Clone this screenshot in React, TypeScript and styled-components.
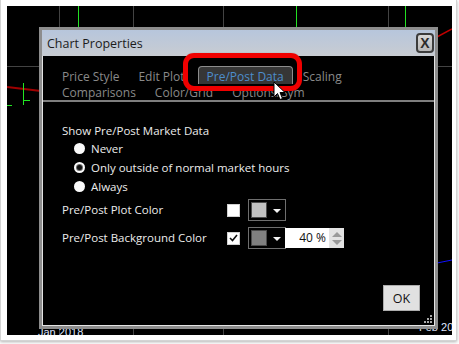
import React from "react";
import styled, { createGlobalStyle } from "styled-components";

const Global = createGlobalStyle`
  html, body { margin: 0; padding: 0; background: #ffffff; }
  body {
    width: 459px; height: 344px; overflow: hidden;
    font-family: "Open Sans", "Noto Sans", sans-serif;
  }
`;

const Frame = styled.div`
  width: 457px;
  height: 341px;
  box-sizing: border-box;
  padding: 6px 5px 6px 7px;
  background: #ffffff;
  border: 1px solid #d4d4d4;
  border-top: none;
  box-shadow: 0 1px 3px rgba(0, 0, 0, 0.3);
`;

const ChartArea = styled.div`
  position: relative;
  width: 445px;
  height: 329px;
  margin-left: -1px;
  background: #000;
  overflow: hidden;
`;

const ChartSvg = styled.svg`
  position: absolute;
  left: 0;
  top: 0;
`;

const AxisLabel = styled.div<{ $x: number; $y: number }>`
  position: absolute;
  left: ${(p) => p.$x}px;
  top: ${(p) => p.$y}px;
  font-family: "Liberation Sans", Arial, sans-serif;
  font-size: 11px;
  line-height: 13px;
  color: #dfe6ff;
  white-space: nowrap;
`;

const Dialog = styled.div`
  position: absolute;
  left: 32px;
  top: 21px;
  width: 399px;
  height: 302px;
  box-sizing: border-box;
  border: 3px solid #8d8d8d;
  display: flex;
  flex-direction: column;
`;

const TitleBar = styled.div`
  height: 26px;
  flex: none;
  display: flex;
  align-items: center;
  justify-content: space-between;
  padding: 0 1px 0 5px;
  background: linear-gradient(#b7c6dc, #c8ccd2);
`;

const Title = styled.span`
  font-size: 12.5px;
  color: #1c1c1c;
`;

const CloseButton = styled.div`
  width: 14px;
  height: 16px;
  border: 2px solid #3c3c3c;
  border-radius: 4px;
  background: linear-gradient(#d8d8d8, #b8b8b8);
  display: flex;
  align-items: center;
  justify-content: center;
  font-family: "Liberation Sans", Arial, sans-serif;
  font-weight: bold;
  font-size: 14px;
  color: #2c2c2c;
`;

const Body = styled.div`
  flex: 1;
  display: flex;
  flex-direction: column;
  background: #000;
  border: 1px solid #e4e4e4;
  border-top: none;
  position: relative;
`;

const TabsArea = styled.div`
  padding: 10px 0 0 10px;
  display: flex;
  flex-direction: column;
`;

const TabRow = styled.div<{ $h: number }>`
  display: flex;
  align-items: flex-end;
  gap: 1px;
  height: ${(p) => p.$h}px;
`;

const Tab = styled.div<{ $active?: boolean }>`
  box-sizing: border-box;
  padding: 2px 8px 0;
  height: 18px;
  line-height: 15px;
  font-size: 12px;
  white-space: nowrap;
  margin-left: ${(p) => (p.$active ? "3px" : "0")};
  color: ${(p) => (p.$active ? "#4d8dcc" : "#8a8a8a")};
  background: ${(p) => (p.$active ? "#363636" : "transparent")};
  border: 1px solid ${(p) => (p.$active ? "#8c8c8c" : "transparent")};
  border-bottom: none;
  border-radius: 4px 4px 0 0;
`;

const Separator = styled.div`
  height: 2px;
  background: #7e7e7e;
`;

const Content = styled.div`
  flex: 1;
  padding: 21px 0 0 19px;
  display: flex;
  flex-direction: column;
`;

const Label = styled.div`
  font-size: 11.5px;
  line-height: 16px;
  color: #ececec;
  white-space: nowrap;
`;

const RadioGroup = styled.div`
  display: flex;
  flex-direction: column;
  padding: 0 0 0 12px;
`;

const RadioRow = styled.div`
  display: flex;
  align-items: center;
  gap: 6px;
  height: 19px;
`;

const Radio = styled.div<{ $checked?: boolean }>`
  width: 11px;
  height: 11px;
  border-radius: 50%;
  background: #fafafa;
  display: flex;
  align-items: center;
  justify-content: center;
  &::after {
    content: "";
    display: ${(p) => (p.$checked ? "block" : "none")};
    width: 5px;
    height: 5px;
    border-radius: 50%;
    background: #111;
    box-shadow: 0 0 0 1px #6a6a6a;
  }
`;

const FieldRow = styled.div<{ $mt: number }>`
  display: flex;
  align-items: center;
  height: 22px;
  margin-top: ${(p) => p.$mt}px;
`;

const FieldLabel = styled(Label)`
  width: 165px;
`;

const CheckBox = styled.div`
  width: 13px;
  height: 13px;
  box-sizing: border-box;
  background: #ffffff;
  border: 1px solid #d0d0d0;
  display: flex;
  align-items: center;
  justify-content: center;
  margin-right: 8px;
`;

const ColorPicker = styled.div`
  width: 38px;
  height: 22px;
  box-sizing: border-box;
  border: 1px solid #6e6e6e;
  display: flex;
  align-items: center;
  padding-left: 2px;
  gap: 6px;
`;

const Swatch = styled.div<{ $color: string }>`
  width: 16px;
  height: 16px;
  box-sizing: border-box;
  background: ${(p) => p.$color};
  border: 1px solid #4a4a4a;
`;

const Arrow = styled.div`
  width: 0;
  height: 0;
  border-left: 4px solid transparent;
  border-right: 4px solid transparent;
  border-top: 4px solid #f4f4f4;
  margin-top: 1px;
`;

const NumberInput = styled.div`
  width: 44px;
  height: 20px;
  background: #ffffff;
  font-size: 12px;
  line-height: 20px;
  text-align: right;
  padding-right: 3px;
  box-sizing: border-box;
  color: #111;
  margin-left: -1px;
`;

const Spinner = styled.div`
  width: 15px;
  height: 20px;
  background: #e3e3e3;
  display: flex;
  flex-direction: column;
  align-items: center;
  justify-content: space-around;
  padding: 2px 0;
  box-sizing: border-box;
`;

const SpinArrow = styled.div<{ $up?: boolean }>`
  width: 0;
  height: 0;
  border-left: 5px solid transparent;
  border-right: 5px solid transparent;
  ${(p) => (p.$up ? "border-bottom: 5px solid #9a9a9a;" : "border-top: 5px solid #9a9a9a;")}
`;

const Footer = styled.div`
  display: flex;
  justify-content: flex-end;
  padding: 0 14px 14px 0;
`;

const OkButton = styled.div`
  width: 37px;
  height: 26px;
  box-sizing: border-box;
  background: #e1e1e1;
  border: 1px solid #adadad;
  display: flex;
  align-items: center;
  justify-content: center;
  font-size: 12.5px;
  color: #111;
`;

const Grip = styled.svg`
  position: absolute;
  right: 1px;
  bottom: 1px;
`;

const Highlight = styled.div`
  position: absolute;
  left: 176px;
  top: 47px;
  width: 119px;
  height: 38px;
  box-sizing: border-box;
  border: 5px solid #f00000;
  border-radius: 11px;
  box-shadow: 0 0 1px rgba(0,0,0,0.4);
`;

const Cursor = styled.svg`
  position: absolute;
  left: 266px;
  top: 75px;
`;

export default function App() {
  return (
    <>
      <Global />
      <Frame>
        <ChartArea>
          <ChartSvg width={445} height={329}>
            {[52, 126, 216, 381].map((x) => (
              <line key={x} x1={x + 0.5} y1={0} x2={x + 0.5} y2={329} stroke="#434343" strokeWidth={1} />
            ))}
            <line x1={0} y1={60.5} x2={445} y2={60.5} stroke="#434343" strokeWidth={1} />
            {[71, 289, 398].map((x) => (
              <line key={x} x1={x + 0.5} y1={0} x2={x + 0.5} y2={40} stroke="#22e022" strokeWidth={1} />
            ))}
            <line x1={0} y1={81} x2={34} y2={85} stroke="#a00000" strokeWidth={2} />
            <line x1={428} y1={32} x2={445} y2={23} stroke="#c00000" strokeWidth={1.5} />
            <line x1={16.5} y1={77} x2={16.5} y2={99} stroke="#22e622" strokeWidth={1} />
            <line x1={16} y1={94.5} x2={23} y2={94.5} stroke="#22e622" strokeWidth={1} />
            <line x1={0} y1={99.5} x2={5} y2={99.5} stroke="#22e622" strokeWidth={1} />
            <line x1={430} y1={257} x2={445} y2={254} stroke="#1010ff" strokeWidth={1} />
          </ChartSvg>
          <AxisLabel $x={31} $y={320}>Jan 2018</AxisLabel>
          <AxisLabel $x={412} $y={315}>Feb 20</AxisLabel>

          <Dialog>
            <TitleBar>
              <Title>Chart Properties</Title>
              <CloseButton>X</CloseButton>
            </TitleBar>
            <Body>
              <TabsArea>
                <TabRow $h={18}>
                  <Tab>Price Style</Tab>
                  <Tab>Edit Plot</Tab>
                  <Tab $active>Pre/Post Data</Tab>
                  <Tab>Scaling</Tab>
                </TabRow>
                <TabRow $h={16}>
                  <Tab>Comparisons</Tab>
                  <Tab>Color/Grid</Tab>
                  <Tab>Options/Sym</Tab>
                </TabRow>
              </TabsArea>
              <Separator />
              <Content>
                <Label>Show Pre/Post Market Data</Label>
                <RadioGroup>
                  <RadioRow>
                    <Radio />
                    <Label>Never</Label>
                  </RadioRow>
                  <RadioRow>
                    <Radio $checked />
                    <Label>Only outside of normal market hours</Label>
                  </RadioRow>
                  <RadioRow>
                    <Radio />
                    <Label>Always</Label>
                  </RadioRow>
                </RadioGroup>
                <FieldRow $mt={3}>
                  <FieldLabel>Pre/Post Plot Color</FieldLabel>
                  <CheckBox />
                  <ColorPicker>
                    <Swatch $color="#c0c0c0" />
                    <Arrow />
                  </ColorPicker>
                </FieldRow>
                <FieldRow $mt={6}>
                  <FieldLabel>Pre/Post Background Color</FieldLabel>
                  <CheckBox>
                    <svg width="9" height="8" viewBox="0 0 9 8">
                      <path d="M1 4 L3.5 6.5 L8 1" fill="none" stroke="#111" strokeWidth="1.6" />
                    </svg>
                  </CheckBox>
                  <ColorPicker>
                    <Swatch $color="#808080" />
                    <Arrow />
                  </ColorPicker>
                  <NumberInput>40 %</NumberInput>
                  <Spinner>
                    <SpinArrow $up />
                    <SpinArrow />
                  </Spinner>
                </FieldRow>
              </Content>
              <Footer>
                <OkButton>OK</OkButton>
              </Footer>
              <Grip width="10" height="10" viewBox="0 0 10 10">
                {[
                  [7, 1],
                  [4, 4],
                  [7, 4],
                  [1, 7],
                  [4, 7],
                  [7, 7],
                ].map(([x, y]) => (
                  <rect key={`${x}-${y}`} x={x} y={y} width={2} height={2} fill="#a8a8a8" />
                ))}
              </Grip>
            </Body>
          </Dialog>

          <Highlight />
          <Cursor width="14" height="22" viewBox="0 0 14 22">
            <path
              d="M1 1 L1 16 L4.5 12.5 L7 18.5 L9.5 17.5 L7 11.5 L12 11.5 Z"
              fill="#ffffff"
              stroke="#000000"
              strokeWidth="1"
              strokeLinejoin="round"
            />
          </Cursor>
        </ChartArea>
      </Frame>
    </>
  );
}
